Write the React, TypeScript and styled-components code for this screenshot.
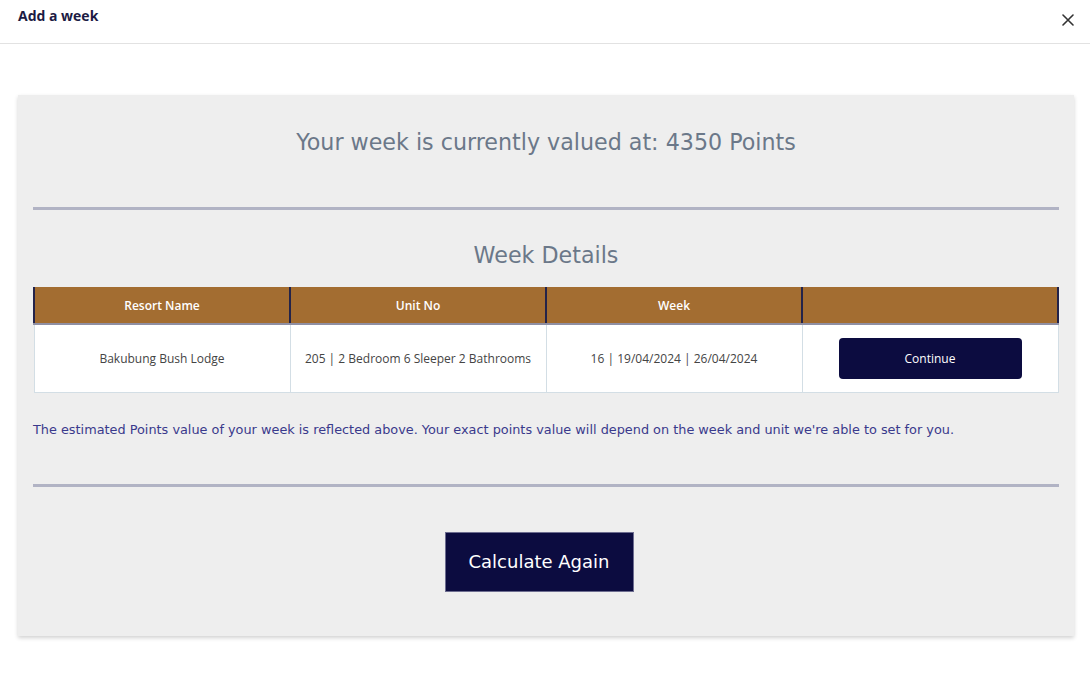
import React from "react";
import styled, { createGlobalStyle } from "styled-components";

const Global = createGlobalStyle`
  html, body { margin: 0; padding: 0; background: #ffffff; }
  body { width: 1090px; height: 692px; overflow: hidden; font-family: "Open Sans", "Noto Sans", sans-serif; }
  * { box-sizing: border-box; }
`;

const Modal = styled.div`
  width: 1090px;
  height: 692px;
  background: #fff;
  display: flex;
  flex-direction: column;
`;

const Header = styled.div`
  height: 44px;
  border-bottom: 1px solid #e2e2e2;
  display: flex;
  align-items: flex-start;
  justify-content: space-between;
  padding: 6px 15px 0 18px;
`;

const Title = styled.h1`
  margin: 0;
  font-family: "Open Sans", sans-serif;
  font-weight: 700;
  font-size: 14px;
  line-height: 20px;
  color: #1c1b44;
`;

const Close = styled.button`
  border: 0;
  background: none;
  padding: 0;
  margin-top: 7px;
  width: 14px;
  height: 14px;
  display: flex;
  align-items: center;
  justify-content: center;
  cursor: pointer;
`;

const Body = styled.div`
  padding: 51px 16px 0 18px;
`;

const Card = styled.div`
  background: #eeeeee;
  box-shadow: 0 2px 4px rgba(0, 0, 0, 0.18);
  padding: 0 15px 44px 15px;
  display: flex;
  flex-direction: column;
`;

const Heading = styled.h2<{ $top: number }>`
  margin: ${(p) => p.$top}px 0 0 0;
  text-align: center;
  font-family: "DejaVu Sans", Verdana, sans-serif;
  font-weight: 400;
  font-size: 22.2px;
  line-height: 30px;
  color: #6b7889;
`;

const Divider = styled.hr<{ $top: number }>`
  margin: ${(p) => p.$top}px 0 0 0;
  border: 0;
  height: 3px;
  background: #b1b3c4;
`;

const Table = styled.table`
  margin-top: 17px;
  width: 100%;
  border-collapse: collapse;
  table-layout: fixed;
  font-family: "Open Sans", sans-serif;
  font-size: 12px;
`;

const Th = styled.th`
  background: #a36d31;
  color: #fff;
  font-weight: 600;
  height: 37px;
  border-left: 2px solid #23234a;
  border-bottom: 2px solid #8f8fa3;
  text-align: center;
  padding: 0;
  &:last-child { border-right: 2px solid #23234a; }
`;

const Td = styled.td`
  background: #fff;
  color: #444;
  height: 68px;
  border: 1px solid #d3dee5;
  text-align: center;
  padding: 0;
`;

const ContinueButton = styled.button`
  background: #0c0c40;
  color: #fff;
  border: 0;
  border-radius: 4px;
  width: 183px;
  height: 41px;
  font-family: "Open Sans", sans-serif;
  font-size: 12px;
  cursor: pointer;
`;

const Note = styled.p`
  margin: 28px 0 0 0;
  font-family: "DejaVu Sans", Verdana, sans-serif;
  font-size: 12.85px;
  line-height: 18px;
  color: #3a3a8c;
`;

const ActionRow = styled.div`
  display: flex;
  justify-content: center;
  margin-top: 45px;
  padding-right: 14px;
`;

const CalcButton = styled.button`
  background: #0c0c40;
  color: #fff;
  border: 1px solid #6d6d90;
  width: 189px;
  height: 60px;
  font-family: "DejaVu Sans", Verdana, sans-serif;
  font-size: 18px;
  cursor: pointer;
`;

export default function App() {
  return (
    <>
      <Global />
      <Modal>
        <Header>
          <Title>Add a week</Title>
          <Close aria-label="Close">
            <svg width="12" height="12" viewBox="0 0 12 12">
              <path d="M1 1L11 11M11 1L1 11" stroke="#333" strokeWidth="1.6" strokeLinecap="round" />
            </svg>
          </Close>
        </Header>
        <Body>
          <Card>
            <Heading $top={32}>Your week is currently valued at: 4350 Points</Heading>
            <Divider $top={50} />
            <Heading $top={30}>Week Details</Heading>
            <Table>
              <thead>
                <tr>
                  <Th>Resort Name</Th>
                  <Th>Unit No</Th>
                  <Th>Week</Th>
                  <Th></Th>
                </tr>
              </thead>
              <tbody>
                <tr>
                  <Td>Bakubung Bush Lodge</Td>
                  <Td>205 | 2 Bedroom 6 Sleeper 2 Bathrooms</Td>
                  <Td>16 | 19/04/2024 | 26/04/2024</Td>
                  <Td>
                    <ContinueButton>Continue</ContinueButton>
                  </Td>
                </tr>
              </tbody>
            </Table>
            <Note>
              The estimated Points value of your week is reflected above. Your exact points value will depend on the week and unit we're able to set for you.
            </Note>
            <Divider $top={45} />
            <ActionRow>
              <CalcButton>Calculate Again</CalcButton>
            </ActionRow>
          </Card>
        </Body>
      </Modal>
    </>
  );
}
